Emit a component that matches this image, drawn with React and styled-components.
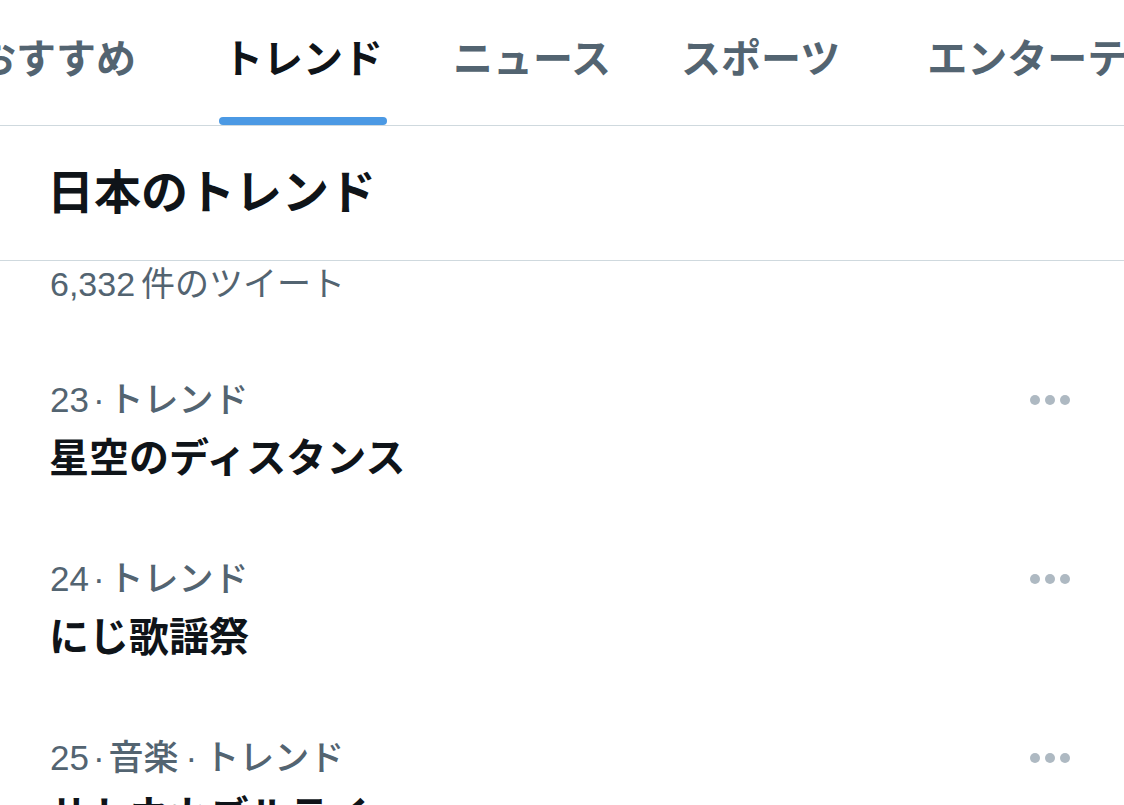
import React from 'react';
import styled, {createGlobalStyle} from 'styled-components';

const GlobalStyle = createGlobalStyle`
  body {
    margin: 0;
    background: #ffffff;
    font-family: "Liberation Sans", "Noto Sans CJK JP", sans-serif;
  }
`;

const tabs = [
  {label: 'おすすめ', pad: '0 52px 0 35px'},
  {label: 'トレンド', pad: '0 35px'},
  {label: 'ニュース', pad: '0 35px'},
  {label: 'スポーツ', pad: '0 35px'},
  {label: 'エンターテインメント', pad: '0 35px 0 52px'},
];

const trends = [
  {rank: 23, category: null, name: '星空のディスタンス'},
  {rank: 24, category: null, name: 'にじ歌謡祭'},
  {rank: 25, category: '音楽', name: 'サトウカズルテイ'},
];

const DotsIcon = () => (
  <svg width="42" height="12" viewBox="0 0 42 12">
    <circle cx="6" cy="6" r="5" fill="#aeb9c2"/>
    <circle cx="21" cy="6" r="5" fill="#aeb9c2"/>
    <circle cx="36" cy="6" r="5" fill="#aeb9c2"/>
  </svg>
);

const App = () => {
  return (
    <Page>
      <GlobalStyle/>
      <TabBar>
        <TabRow>
          {tabs.map((t, i) => (
            <Tab key={t.label} pad={t.pad}>
              <TabLabel active={i === 1}>
                <span>{t.label}</span>
                <Indicator active={i === 1}/>
              </TabLabel>
            </Tab>
          ))}
        </TabRow>
      </TabBar>

      <Header>
        <h2>日本のトレンド</h2>
      </Header>

      <PrevTail>6,332<Count>件のツイート</Count></PrevTail>

      {trends.map((item) => (
        <TrendRow key={item.rank}>
          <Meta>
            <span>
              {item.rank}<Sep>·</Sep>
              {item.category ? <>{item.category}<Sep wide>·</Sep></> : null}
              トレンド
            </span>
            <MoreButton><DotsIcon/></MoreButton>
          </Meta>
          <TrendName>{item.name}</TrendName>
        </TrendRow>
      ))}
    </Page>
  );
};

export default App;

const Page = styled.div`
  width: 1124px;
  height: 805px;
  overflow: hidden;
  background: #ffffff;
`;

const TabBar = styled.div`
  height: 126px;
  box-sizing: border-box;
  border-bottom: 1px solid #cfd9de;
  overflow: hidden;
`;

const TabRow = styled.div`
  display: flex;
  flex-direction: row;
  margin-left: -59px;
  height: 125px;
`;

const Tab = styled.div`
  flex-shrink: 0;
  display: flex;
  justify-content: center;
  padding: ${(p) => p.pad};
  height: 125px;
`;

const TabLabel = styled.div`
  display: flex;
  flex-direction: column;
  align-items: stretch;
  padding-top: 38px;

  span {
    font-size: 40px;
    line-height: 42px;
    font-weight: 700;
    white-space: nowrap;
    color: ${(p) => (p.active ? '#0f1419' : '#536471')};
  }
`;

const Indicator = styled.div`
  margin: auto -4px 0;
  height: 8px;
  border-radius: 4px;
  background: ${(p) => (p.active ? '#4b99e4' : 'transparent')};
`;

const Header = styled.div`
  height: 134px;
  box-sizing: content-box;
  border-bottom: 1px solid #cfd9de;
  display: flex;
  align-items: center;
  padding: 0 47px;

  h2 {
    margin: 0;
    font-size: 47px;
    line-height: 56px;
    font-weight: 700;
    color: #0f1419;
  }
`;

const PrevTail = styled.div`
  padding: 1px 50px 37px;
  font-size: 34px;
  line-height: 44px;
  color: #536471;
`;

const Count = styled.span`
  margin-left: 6px;
`;

const TrendRow = styled.div`
  display: flex;
  flex-direction: column;
  padding: 33px 53px 36px 50px;
`;

const Meta = styled.div`
  display: flex;
  flex-direction: row;
  align-items: center;
  justify-content: space-between;
  font-size: 35px;
  line-height: 48px;
  font-weight: 500;
  color: #536471;
`;

const Sep = styled.span`
  margin: 0 ${(p) => (p.wide ? '7px' : '4px')};
`;

const MoreButton = styled.div`
  display: flex;
  align-items: center;
`;

const TrendName = styled.div`
  margin-top: 6px;
  margin-left: -1px;
  font-size: 40px;
  line-height: 56px;
  font-weight: 700;
  color: #0f1419;
`;
